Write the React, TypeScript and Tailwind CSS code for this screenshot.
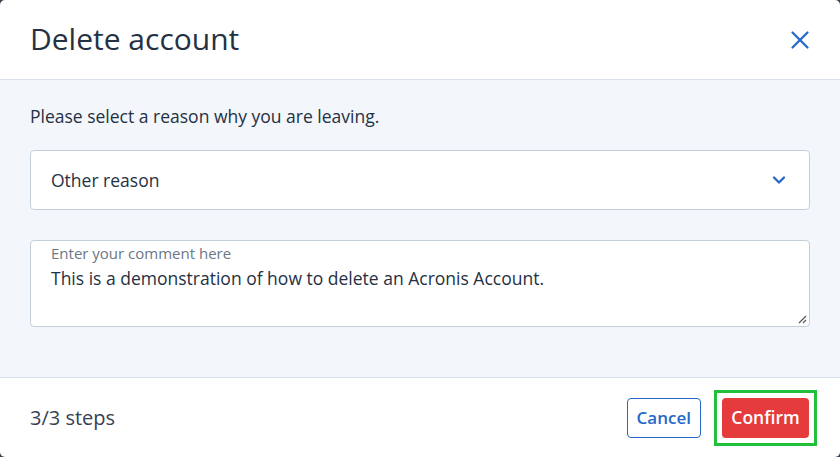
import { X, ChevronDown } from "lucide-react";

const App = () => {
    return (
        <div className="w-[840px] h-[457px] bg-[#3a4350]" style={{ fontFamily: '"Open Sans", "Liberation Sans", sans-serif' }}>
            <div className="w-full h-full bg-white rounded-[5px] overflow-hidden flex flex-col">
                {/* header */}
                <div className="h-[80px] flex items-center justify-between pl-[30px] pr-[25px] border-b border-[#dbe1ea]">
                    <h1 className="text-[30px] text-[#243143] leading-none pb-[1px]">Delete account</h1>
                    <button className="text-[#2668c5]">
                        <X size={30} strokeWidth={1.8} />
                    </button>
                </div>
                {/* body */}
                <div className="h-[298px] bg-[#f3f6fa] px-[30px] pt-[23px] flex flex-col border-b border-[#dbe1ea]">
                    <p className="text-[17.5px] text-[#243143] leading-[26px]">Please select a reason why you are leaving.</p>
                    <div className="mt-[21px] h-[60px] bg-white border border-[#c5cfdc] rounded-[4px] flex items-center justify-between pl-[20px] pr-[20px]">
                        <span className="text-[17.5px] text-[#243143]">Other reason</span>
                        <ChevronDown size={20} strokeWidth={2.8} className="text-[#2668c5]" />
                    </div>
                    <div className="mt-[30px] h-[87px] bg-white border border-[#c5cfdc] rounded-[4px] pl-[20px] pt-[1px] relative">
                        <div className="text-[15px] text-[#6b7785] leading-[22px]">Enter your comment here</div>
                        <div className="text-[17.5px] text-[#243143] leading-[28px]">This is a demonstration of how to delete an Acronis Account.</div>
                        <svg className="absolute right-[2px] bottom-[2px]" width="10" height="10" viewBox="0 0 10 10">
                            <path d="M9 2 L2 9 M9 6 L6 9" stroke="#555" strokeWidth="1.2" />
                        </svg>
                    </div>
                </div>
                {/* footer */}
                <div className="flex-1 flex items-center justify-between pl-[30px] pr-[23px]">
                    <span className="text-[20px] text-[#374151]">3/3 steps</span>
                    <div className="flex items-center gap-[13px]">
                        <button className="h-[40px] px-[9px] border border-[#2668c5] rounded-[4px] text-[#2668c5] text-[17px] font-semibold">Cancel</button>
                        <div className="border-[3px] border-[#20c03a] p-[5px]">
                            <button className="h-[40px] w-[87px] bg-[#e53b3d] rounded-[4px] text-white text-[17.5px] font-semibold">Confirm</button>
                        </div>
                    </div>
                </div>
            </div>
        </div>
    )
}
export default App
